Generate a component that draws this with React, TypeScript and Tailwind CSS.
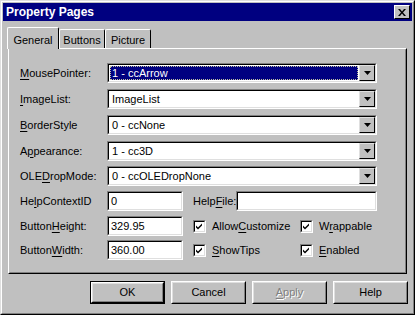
import { ReactNode } from 'react';

const font = { fontFamily: '"Liberation Sans", Arial, sans-serif' };

function U({ text, at }: { text: string; at: number }) {
  return (
    <>
      {text.slice(0, at)}
      <span className="underline underline-offset-[2px]">{text[at]}</span>
      {text.slice(at + 1)}
    </>
  );
}

function Sunken({ children, className = '' }: { children?: ReactNode; className?: string }) {
  return (
    <div className={`border border-t-[#808080] border-l-[#808080] border-b-white border-r-white ${className}`}>
      <div className="h-full w-full border border-t-black border-l-black border-b-[#dfdfdf] border-r-[#dfdfdf] bg-white">
        {children}
      </div>
    </div>
  );
}

function Arrow() {
  return (
    <div className="flex h-full w-[16px] items-center justify-center border border-t-[#dfdfdf] border-l-[#dfdfdf] border-b-black border-r-black bg-[#c0c0c0]">
      <svg width="7" height="4" viewBox="0 0 7 4">
        <path d="M0 0h7L3.5 4z" fill="#000" />
      </svg>
    </div>
  );
}

function Combo({ value, selected }: { value: string; selected?: boolean }) {
  return (
    <Sunken className="h-[20px] w-[270px]">
      <div className="flex h-full items-stretch">
        <div className="flex flex-1 items-center p-[1px]">
          {selected ? (
            <div className="flex h-full w-full items-center border border-dotted border-[#c0c0a0] bg-[#000080] pl-[1px] text-white">
              {value}
            </div>
          ) : (
            <span className="pl-[2px]">{value}</span>
          )}
        </div>
        <Arrow />
      </div>
    </Sunken>
  );
}

function Field({ value, width }: { value: string; width: string }) {
  return (
    <Sunken className={`h-[20px] ${width}`}>
      <div className="flex h-full items-center pl-[2px]">{value}</div>
    </Sunken>
  );
}

function Check({ children }: { children: ReactNode }) {
  return (
    <div className="flex items-center gap-[6px]">
      <Sunken className="h-[13px] w-[13px]">
        <svg width="9" height="9" viewBox="0 0 9 9" className="block">
          <path d="M1 3.5l2 2 4-4v2l-4 4-2-2z" fill="#000" />
        </svg>
      </Sunken>
      <span>{children}</span>
    </div>
  );
}

function Label({ children }: { children: ReactNode }) {
  return <div className="w-[87px] shrink-0">{children}</div>;
}

function Button({ children, isDefault, disabled }: { children: ReactNode; isDefault?: boolean; disabled?: boolean }) {
  return (
    <div className={`h-[23px] w-[75px] ${isDefault ? 'border border-black' : ''}`}>
      <div className="flex h-full w-full items-center justify-center border border-t-white border-l-white border-b-black border-r-black bg-[#c0c0c0]">
        <div className="flex h-full w-full items-center justify-center border border-t-[#dfdfdf] border-l-[#dfdfdf] border-b-[#808080] border-r-[#808080]">
          <span className={disabled ? 'text-[#808080] [text-shadow:1px_1px_0_#fff]' : ''}>{children}</span>
        </div>
      </div>
    </div>
  );
}

export default function App() {
  const combos = [
    { label: <U text="MousePointer:" at={0} />, value: '1 - ccArrow', selected: true },
    { label: <U text="ImageList:" at={0} />, value: 'ImageList' },
    { label: <U text="BorderStyle" at={0} />, value: '0 - ccNone' },
    { label: <U text="Appearance:" at={1} />, value: '1 - cc3D' },
    { label: <U text="OLEDropMode:" at={3} />, value: '0 - ccOLEDropNone' },
  ];

  return (
    <div style={font} className="h-[315px] w-[415px] bg-[#c0c0c0] text-[11px] text-black">
      <div className="h-full w-full border border-t-[#dfdfdf] border-l-[#dfdfdf] border-b-black border-r-black">
        <div className="flex h-full w-full flex-col border border-t-white border-l-white border-b-[#808080] border-r-[#808080] p-[1px]">
          <div className="flex h-[18px] items-center justify-between bg-[#000080] pl-[3px] pr-[2px]">
            <span className="text-[12px] font-bold text-white">Property Pages</span>
            <div className="flex h-[14px] w-[16px] items-center justify-center border border-t-white border-l-white border-b-black border-r-black bg-[#c0c0c0]">
              <svg width="8" height="7" viewBox="0 0 8 7">
                <path d="M0 0h2l2 2.5L6 0h2L5 3.5 8 7H6L4 4.5 2 7H0l3-3.5z" fill="#000" />
              </svg>
            </div>
          </div>

          <div className="mt-[6px] flex items-end pl-[4px]">
            <div className="relative z-10 -mb-[1px] flex h-[22px] w-[52px] items-start justify-center rounded-t-[2px] border-l border-t border-r border-l-white border-t-white border-r-black bg-[#c0c0c0] pt-[4px]">
              General
            </div>
            <div className="flex h-[19px] w-[46px] items-start justify-center rounded-t-[2px] border-l border-t border-r border-l-white border-t-white border-r-black pt-[2px]">
              Buttons
            </div>
            <div className="flex h-[19px] w-[46px] items-start justify-center rounded-t-[2px] border-l border-t border-r border-l-white border-t-white border-r-black pt-[2px]">
              Picture
            </div>
          </div>

          <div className="mx-[5px] h-[226px] border border-t-white border-l-white border-b-black border-r-black">
            <div className="flex h-full flex-col border border-transparent border-b-[#808080] border-r-[#808080] pl-[10px] pt-[13px]">
              {combos.map((c, i) => (
                <div key={i} className={`flex items-center ${i === 0 ? '' : i === 4 ? 'mt-[5px]' : 'mt-[6px]'}`}>
                  <Label>{c.label}</Label>
                  <Combo value={c.value} selected={c.selected} />
                </div>
              ))}
              <div className="mt-[5px] flex items-center">
                <Label>
                  <U text="HelpContextID" at={2} />
                </Label>
                <Field value="0" width="w-[76px]" />
                <span className="ml-[10px] w-[43px]">
                  <U text="HelpFile:" at={4} />
                </span>
                <Field value="" width="w-[141px]" />
              </div>
              <div className="mt-[5px] flex items-center">
                <Label>
                  <U text="ButtonHeight:" at={6} />
                </Label>
                <Field value="329.95" width="w-[76px]" />
                <div className="ml-[10px] w-[107px]">
                  <Check>
                    <U text="AllowCustomize" at={5} />
                  </Check>
                </div>
                <Check>
                  <U text="Wrappable" at={1} />
                </Check>
              </div>
              <div className="mt-[4px] flex items-center">
                <Label>
                  <U text="ButtonWidth:" at={6} />
                </Label>
                <Field value="360.00" width="w-[76px]" />
                <div className="ml-[10px] w-[107px]">
                  <Check>
                    <U text="ShowTips" at={0} />
                  </Check>
                </div>
                <Check>
                  <U text="Enabled" at={0} />
                </Check>
              </div>
            </div>
          </div>

          <div className="mr-[4px] mt-[7px] flex justify-end gap-[6px]">
            <Button isDefault>OK</Button>
            <Button>Cancel</Button>
            <Button disabled>
              <U text="Apply" at={0} />
            </Button>
            <Button>Help</Button>
          </div>
        </div>
      </div>
    </div>
  );
}
